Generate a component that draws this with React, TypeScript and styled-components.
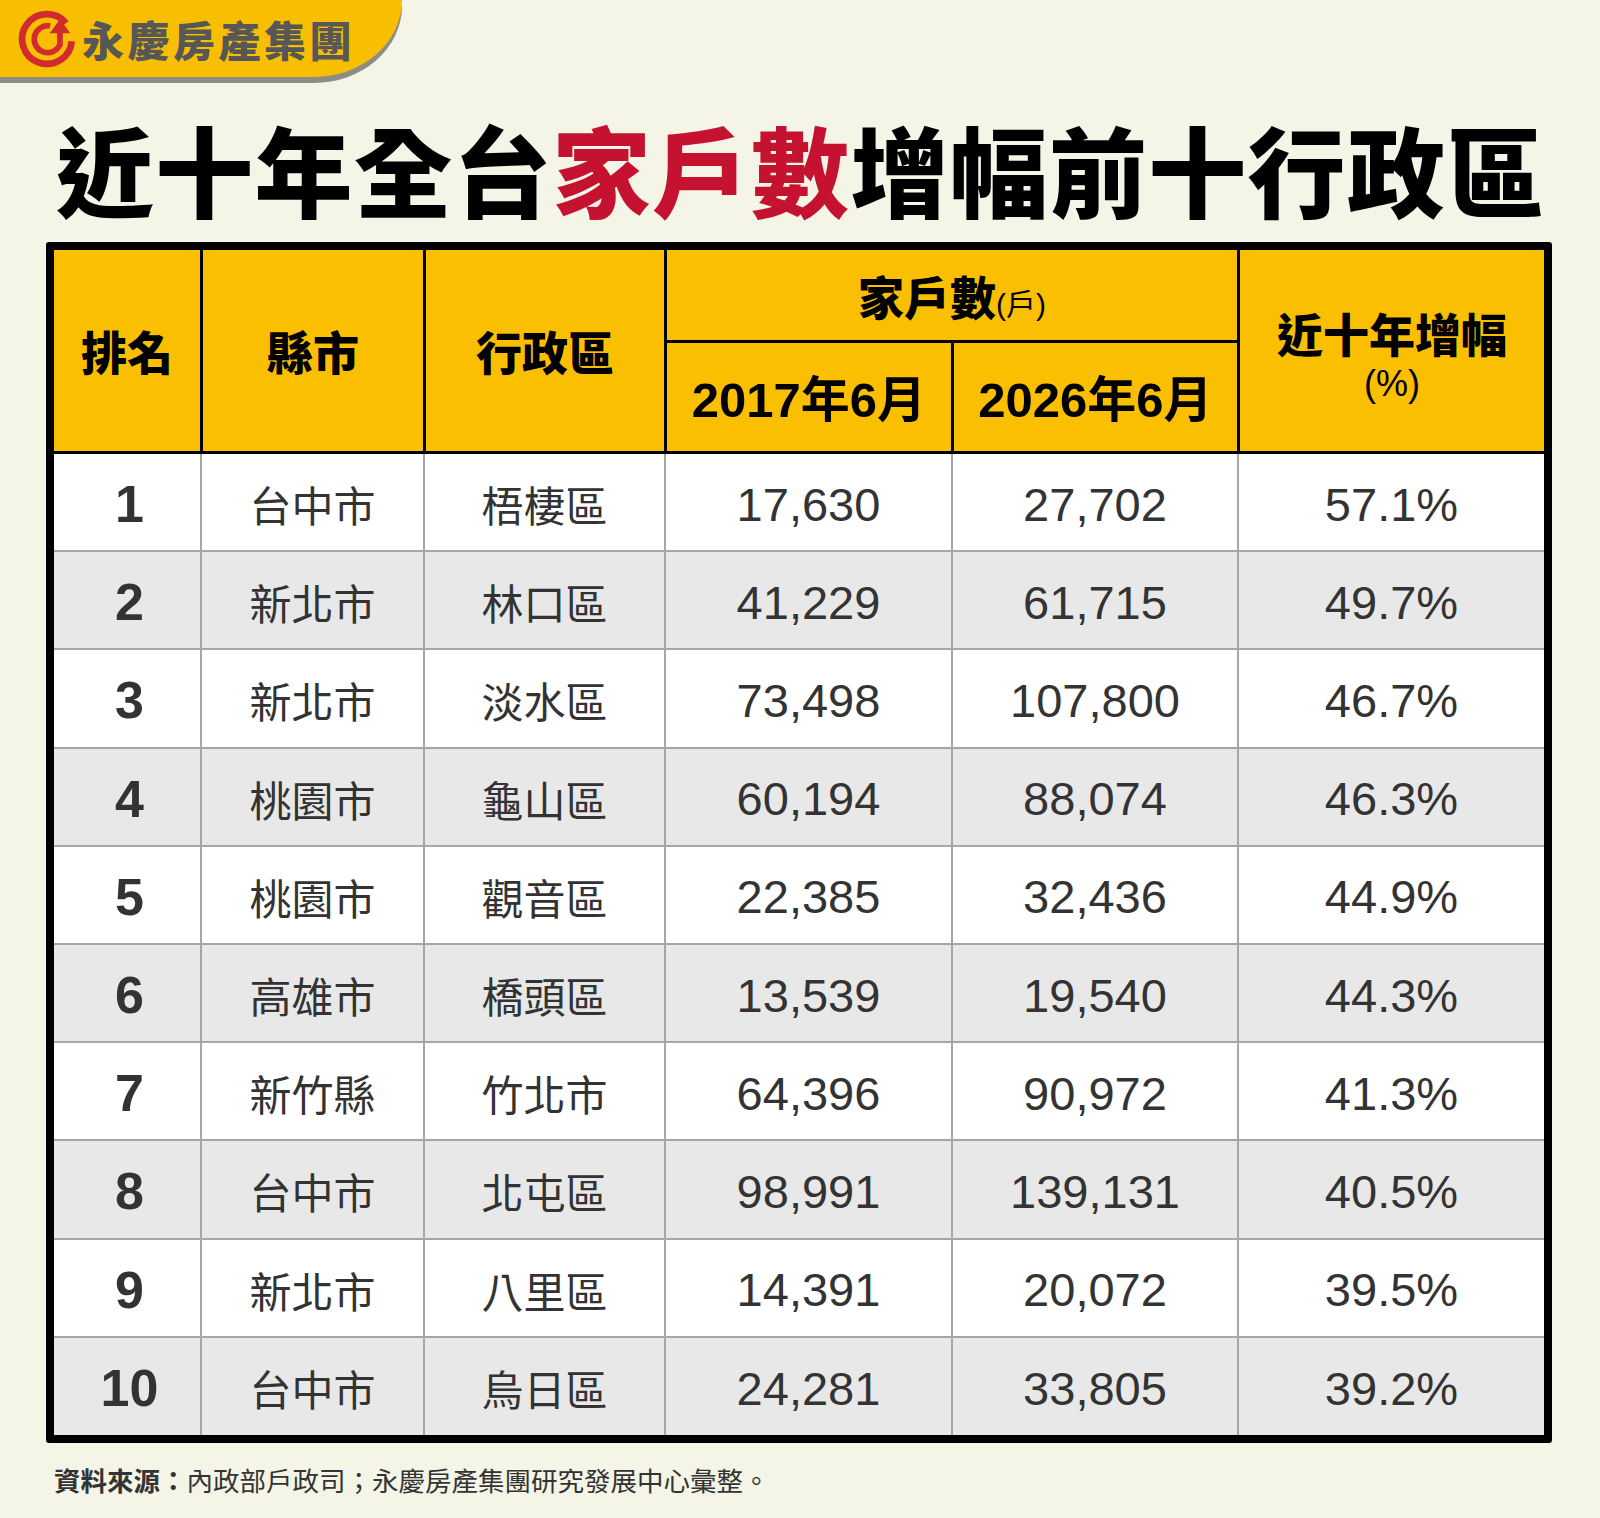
import { createGlobalStyle, styled } from "styled-components"

const GlobalStyle = createGlobalStyle`
  body {
    margin: 0;
    background: #f4f4e7;
  }
`

const CJK = `"Noto Sans CJK TC", "Noto Sans CJK SC", sans-serif`
const LATIN = `"Liberation Sans", "Noto Sans CJK TC", sans-serif`
const COLS = "146px 223px 241px 287px 286px 307px"

type Row = {
  rank: number
  city: string
  district: string
  y2017: string
  y2026: string
  growth: string
}

const rows: Row[] = [
  { rank: 1, city: "台中市", district: "梧棲區", y2017: "17,630", y2026: "27,702", growth: "57.1%" },
  { rank: 2, city: "新北市", district: "林口區", y2017: "41,229", y2026: "61,715", growth: "49.7%" },
  { rank: 3, city: "新北市", district: "淡水區", y2017: "73,498", y2026: "107,800", growth: "46.7%" },
  { rank: 4, city: "桃園市", district: "龜山區", y2017: "60,194", y2026: "88,074", growth: "46.3%" },
  { rank: 5, city: "桃園市", district: "觀音區", y2017: "22,385", y2026: "32,436", growth: "44.9%" },
  { rank: 6, city: "高雄市", district: "橋頭區", y2017: "13,539", y2026: "19,540", growth: "44.3%" },
  { rank: 7, city: "新竹縣", district: "竹北市", y2017: "64,396", y2026: "90,972", growth: "41.3%" },
  { rank: 8, city: "台中市", district: "北屯區", y2017: "98,991", y2026: "139,131", growth: "40.5%" },
  { rank: 9, city: "新北市", district: "八里區", y2017: "14,391", y2026: "20,072", growth: "39.5%" },
  { rank: 10, city: "台中市", district: "烏日區", y2017: "24,281", y2026: "33,805", growth: "39.2%" },
]

const Page = styled.div`
  width: 1600px;
  height: 1518px;
  background: #f4f4e7;
  overflow: hidden;
`

const Banner = styled.div`
  width: 402px;
  height: 77px;
  box-sizing: border-box;
  padding-left: 18px;
  display: flex;
  align-items: center;
  gap: 6px;
  background: #f8bf00;
  border-bottom-right-radius: 92px 80px;
  box-shadow: 0 6px 0 #8d8d86;
`

const BrandName = styled.span`
  font-family: ${CJK};
  font-weight: 900;
  font-size: 42px;
  letter-spacing: 3.5px;
  color: #575757;
  line-height: 1;
`

const Title = styled.h1`
  margin: 35px 0 0;
  padding-left: 56px;
  height: 110px;
  font-family: ${CJK};
  font-weight: 900;
  font-size: 98px;
  letter-spacing: 1.3px;
  line-height: 110px;
  color: #000;
  white-space: nowrap;
`

const Accent = styled.span`
  color: #c41230;
`

const Table = styled.div`
  margin: 20px 0 0 46px;
  width: 1506px;
  box-sizing: border-box;
  border: 8px solid #000;
  border-radius: 3px;
  background: #fff;
`

const Head = styled.div`
  display: grid;
  grid-template-columns: ${COLS};
  grid-template-rows: 93px 108px;
  background: #f9bf00;
  border-bottom: 3px solid #000;
`

const HeadCell = styled.div<{ $col: string; $row: string; $left?: boolean; $bottom?: boolean; $shift?: number }>`
  grid-column: ${(p) => p.$col};
  grid-row: ${(p) => p.$row};
  display: flex;
  flex-direction: column;
  align-items: center;
  justify-content: center;
  padding-top: ${(p) => p.$shift ?? 0}px;
  border-left: ${(p) => (p.$left ? "3px solid #000" : "none")};
  border-bottom: ${(p) => (p.$bottom ? "3px solid #000" : "none")};
  font-family: ${CJK};
  font-weight: 900;
  font-size: 46px;
  color: #000;
  line-height: 1.1;
`

const Unit = styled.span`
  font-family: ${LATIN};
  font-weight: 400;
  font-size: 30px;
`

const HeadLine = styled.div`
  display: flex;
  align-items: baseline;
`

const SubNote = styled.div`
  font-family: ${LATIN};
  font-weight: 400;
  font-size: 36px;
  margin-top: 6px;
`

const YearLabel = styled.div`
  font-family: ${LATIN};
  font-weight: 700;
  font-size: 49px;
  padding-top: 8px;
`

const BodyRow = styled.div<{ $alt: boolean; $last: boolean }>`
  display: grid;
  grid-template-columns: ${COLS};
  height: ${(p) => (p.$last ? "97px" : "98.2px")};
  background: ${(p) => (p.$alt ? "#e8e8e8" : "#ffffff")};
  border-bottom: ${(p) => (p.$last ? "none" : "2px solid #a6a6a6")};
  box-sizing: border-box;
`

const Cell = styled.div<{ $kind: "rank" | "text" | "num"; $first?: boolean }>`
  display: flex;
  align-items: center;
  justify-content: center;
  padding-top: 4px;
  padding-left: ${(p) => (p.$kind === "rank" ? "5px" : "0")};
  border-left: ${(p) => (p.$first ? "none" : "2px solid #a6a6a6")};
  color: #333;
  font-family: ${(p) => (p.$kind === "text" ? CJK : LATIN)};
  font-weight: ${(p) => (p.$kind === "rank" ? 700 : 400)};
  font-size: ${(p) => (p.$kind === "rank" ? "52px" : p.$kind === "text" ? "42px" : "47px")};
  line-height: 1;
`

const Footer = styled.p`
  margin: 22px 0 0;
  padding-left: 54px;
  font-family: ${CJK};
  font-size: 26.5px;
  line-height: 30px;
  color: #333;
`

const FooterLabel = styled.b`
  font-weight: 700;
`

const Logo = () => (
  <svg width="58" height="58" viewBox="0 0 56 56">
    <path
      d="M51.9 30.1 A24 24 0 1 1 46.4 12.6"
      fill="none"
      stroke="#d12a2f"
      strokeWidth="6.5"
      strokeLinecap="butt"
    />
    <path
      d="M31 15.4 A13 13 0 1 0 40.5 33.5 L40.5 22"
      fill="none"
      stroke="#d12a2f"
      strokeWidth="5.5"
    />
    <polygon points="40.5,9 50.5,22.5 30.5,22.5" fill="#d12a2f" />
  </svg>
)

export default function App() {
  return (
    <Page>
      <GlobalStyle />
      <Banner>
        <Logo />
        <BrandName>永慶房產集團</BrandName>
      </Banner>
      <Title>
        近十年全台<Accent>家戶數</Accent>增幅前十行政區
      </Title>
      <Table>
        <Head>
          <HeadCell $col="1" $row="1 / span 2">排名</HeadCell>
          <HeadCell $col="2" $row="1 / span 2" $left>縣市</HeadCell>
          <HeadCell $col="3" $row="1 / span 2" $left>行政區</HeadCell>
          <HeadCell $col="4 / span 2" $row="1" $left $bottom>
            <HeadLine>
              家戶數<Unit>(戶)</Unit>
            </HeadLine>
          </HeadCell>
          <HeadCell $col="4" $row="2" $left>
            <YearLabel>2017年6月</YearLabel>
          </HeadCell>
          <HeadCell $col="5" $row="2" $left>
            <YearLabel>2026年6月</YearLabel>
          </HeadCell>
          <HeadCell $col="6" $row="1 / span 2" $left $shift={10}>
            近十年增幅
            <SubNote>(%)</SubNote>
          </HeadCell>
        </Head>
        {rows.map((r, i) => (
          <BodyRow key={r.rank} $alt={i % 2 === 1} $last={i === rows.length - 1}>
            <Cell $kind="rank" $first>{r.rank}</Cell>
            <Cell $kind="text">{r.city}</Cell>
            <Cell $kind="text">{r.district}</Cell>
            <Cell $kind="num">{r.y2017}</Cell>
            <Cell $kind="num">{r.y2026}</Cell>
            <Cell $kind="num">{r.growth}</Cell>
          </BodyRow>
        ))}
      </Table>
      <Footer>
        <FooterLabel>資料來源：</FooterLabel>內政部戶政司；永慶房產集團研究發展中心彙整。
      </Footer>
    </Page>
  )
}
